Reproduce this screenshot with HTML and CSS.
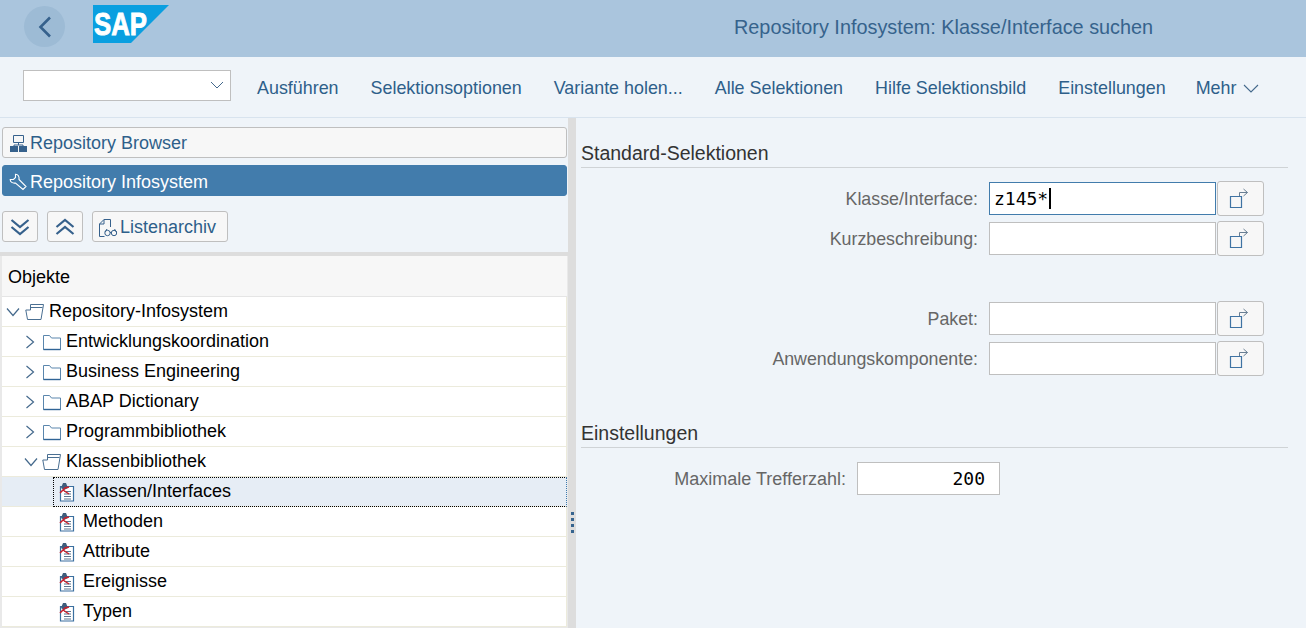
FILE: index.html
```html
<!DOCTYPE html>
<html lang="de">
<head>
  <meta charset="UTF-8">
  <title>Repository Infosystem</title>
  <link rel="stylesheet" href="styles.css">
</head>
<body>

<svg class="defs" width="0" height="0">
  <symbol id="folder" viewBox="0 0 20 18">
    <path d="M1.500 16.500V2.500h6l2 2.500h9v11.500z" fill="#fff" stroke="#5a86ad" stroke-width="1"/>
    <path d="M1.500 16.500h17" stroke="#2f6496" stroke-width="1.400"/>
  </symbol>
  <symbol id="folder-open" viewBox="0 0 20 18">
    <path d="M5.500 7V1.500h13L16 16.500H2.500L0.800 7z" fill="#fff" stroke="#4a6f92" stroke-width="1"/>
    <path d="M5.500 4.500h12" stroke="#4a6f92" stroke-width="1"/>
  </symbol>
  <symbol id="chev-r" viewBox="0 0 12 16">
    <path d="M2.500 2l7 6-7 6" fill="none" stroke="#44698c" stroke-width="1.200"/>
  </symbol>
  <symbol id="chev-d" viewBox="0 0 16 12">
    <path d="M2 2.500l6 7 6-7" fill="none" stroke="#44698c" stroke-width="1.200"/>
  </symbol>
  <symbol id="cls" viewBox="0 0 16 20">
    <path d="M1.500 4.500h13v14.500h-13z" fill="#fff" stroke="#3a6f9f" stroke-width="1.200"/>
    <path d="M5 9.500h7M5 12h7M5 14.500h7M5 17h7" stroke="#59758f" stroke-width="1"/>
    <path d="M4 1l3 0 2 5-4 2-3-2z" fill="#3f5c7c"/>
    <path d="M1 11l5-5 4-1M4 8l6 4" fill="none" stroke="#c9202a" stroke-width="1.500"/>
  </symbol>
  <symbol id="select" viewBox="0 0 20 22">
    <path d="M1.500 9.500h11v11h-11z" fill="none" stroke="#3f73a3" stroke-width="1.200"/>
    <path d="M10.500 9V5.500h8M14.500 2l4 3.500-4 3.500" fill="none" stroke="#6a7f93" stroke-width="1"/>
  </symbol>
</svg>

<header class="shell">
  <button class="back">
    <svg width="16" height="24" viewBox="0 0 16 24"><path d="M13 2.500L3.500 12l9.500 9.500" fill="none" stroke="#36618c" stroke-width="2.600"/></svg>
  </button>
  <svg class="logo" width="76" height="38" viewBox="0 0 76 38">
    <path d="M0 0h76L38 38H0z" fill="#0a9fe0"/>
    <text x="1" y="30" class="logo-text" textLength="53" lengthAdjust="spacingAndGlyphs">SAP</text>
  </svg>
  <div class="shell-title">Repository Infosystem: Klasse/Interface suchen</div>
</header>

<nav class="toolbar">
  <div class="combo">
    <svg width="14" height="8" viewBox="0 0 14 8"><path d="M1 1l6 6 6-6" fill="none" stroke="#44698c" stroke-width="1"/></svg>
  </div>
  <a>Ausführen</a>
  <a>Selektionsoptionen</a>
  <a>Variante holen...</a>
  <a>Alle Selektionen</a>
  <a>Hilfe Selektionsbild</a>
  <a>Einstellungen</a>
  <a class="more">Mehr
    <svg width="16" height="9" viewBox="0 0 16 9"><path d="M1 1l7 7 7-7" fill="none" stroke="#44698c" stroke-width="1.100"/></svg>
  </a>
</nav>

<main class="split">
  <aside class="left">
    <div class="tool-wide">
      <svg width="18" height="18" viewBox="0 0 18 18">
        <path d="M4.500 1.500h10v7h-10z" fill="none" stroke="#36618c"/>
        <path d="M9.500 8.500v2.500M5 12v-1h9v1" fill="none" stroke="#36618c"/>
        <path d="M1 12h8v6H1zM10 12h8v6h-8z" fill="#36618c"/>
      </svg>
      Repository Browser
    </div>
    <div class="tool-wide active">
      <svg width="18" height="18" viewBox="0 0 18 18">
        <path d="M6.500 1.200C9 1.200 10.500 3.500 10 6.500L17 13.500 14 16.500 6.500 10C3.500 10.500 1.200 9 1.200 6.500L4.500 6.500 6.500 4.500z" fill="none" stroke="#fff" stroke-width="1.100"/>
      </svg>
      Repository Infosystem
    </div>
    <div class="tool-row">
      <button class="tool-btn">
        <svg width="20" height="20" viewBox="0 0 20 20"><path d="M1.500 3l8.500 7 8.500-7M1.500 10l8.500 7 8.500-7" fill="none" stroke="#36618c" stroke-width="2.200"/></svg>
      </button>
      <button class="tool-btn">
        <svg width="20" height="20" viewBox="0 0 20 20"><path d="M1.500 10l8.500-7 8.500 7M1.500 17l8.500-7 8.500 7" fill="none" stroke="#36618c" stroke-width="2.200"/></svg>
      </button>
      <button class="tool-btn archive">
        <svg width="20" height="20" viewBox="0 0 20 20">
          <path d="M12.500 9V1.500H6L1.500 6v12.500h5M6 1.500V6H1.500" fill="none" stroke="#36618c"/>
          <circle cx="9.500" cy="15" r="2.700" fill="none" stroke="#36618c"/>
          <circle cx="16" cy="15" r="2.700" fill="none" stroke="#36618c"/>
          <path d="M12 14.500h1.500M7 14l2-3M18.500 14l-2-3" fill="none" stroke="#36618c"/>
        </svg>
        Listenarchiv
      </button>
    </div>
    <div class="tree">
      <div class="tree-head">Objekte</div>
      <div class="node lvl0">
        <svg class="chev" width="16" height="12"><use href="#chev-d"/></svg>
        <svg class="ficon" width="20" height="18"><use href="#folder-open"/></svg>
        Repository-Infosystem
      </div>
      <div class="node lvl1">
        <svg class="chev-side" width="12" height="16"><use href="#chev-r"/></svg>
        <svg class="ficon" width="20" height="18"><use href="#folder"/></svg>
        Entwicklungskoordination
      </div>
      <div class="node lvl1">
        <svg class="chev-side" width="12" height="16"><use href="#chev-r"/></svg>
        <svg class="ficon" width="20" height="18"><use href="#folder"/></svg>
        Business Engineering
      </div>
      <div class="node lvl1">
        <svg class="chev-side" width="12" height="16"><use href="#chev-r"/></svg>
        <svg class="ficon" width="20" height="18"><use href="#folder"/></svg>
        ABAP Dictionary
      </div>
      <div class="node lvl1">
        <svg class="chev-side" width="12" height="16"><use href="#chev-r"/></svg>
        <svg class="ficon" width="20" height="18"><use href="#folder"/></svg>
        Programmbibliothek
      </div>
      <div class="node lvl1">
        <svg class="chev" width="16" height="12"><use href="#chev-d"/></svg>
        <svg class="ficon" width="20" height="18"><use href="#folder-open"/></svg>
        Klassenbibliothek
      </div>
      <div class="node lvl2 selected">
        <div class="focus">
          <svg class="cicon" width="16" height="20"><use href="#cls"/></svg>
          Klassen/Interfaces
        </div>
      </div>
      <div class="node lvl2">
        <svg class="cicon" width="16" height="20"><use href="#cls"/></svg>
        Methoden
      </div>
      <div class="node lvl2">
        <svg class="cicon" width="16" height="20"><use href="#cls"/></svg>
        Attribute
      </div>
      <div class="node lvl2">
        <svg class="cicon" width="16" height="20"><use href="#cls"/></svg>
        Ereignisse
      </div>
      <div class="node lvl2">
        <svg class="cicon" width="16" height="20"><use href="#cls"/></svg>
        Typen
      </div>
    </div>
  </aside>

  <div class="splitter"><span class="grip"></span></div>

  <section class="right">
    <h2 class="group-title">Standard-Selektionen</h2>
    <div class="form-row">
      <label>Klasse/Interface:</label>
      <div class="field focused">z145*<span class="caret"></span></div>
      <button class="sel-btn"><svg width="20" height="22"><use href="#select"/></svg></button>
    </div>
    <div class="form-row">
      <label>Kurzbeschreibung:</label>
      <div class="field"></div>
      <button class="sel-btn"><svg width="20" height="22"><use href="#select"/></svg></button>
    </div>
    <div class="form-row gap-top">
      <label>Paket:</label>
      <div class="field"></div>
      <button class="sel-btn"><svg width="20" height="22"><use href="#select"/></svg></button>
    </div>
    <div class="form-row">
      <label>Anwendungskomponente:</label>
      <div class="field"></div>
      <button class="sel-btn"><svg width="20" height="22"><use href="#select"/></svg></button>
    </div>
    <h2 class="group-title second">Einstellungen</h2>
    <div class="form-row narrow">
      <label>Maximale Trefferzahl:</label>
      <div class="field number">200</div>
    </div>
  </section>
</main>

</body>
</html>
```

FILE: styles.css
```css
html, body {
  margin: 0;
  padding: 0;
  height: 100%;
  overflow: hidden;
}

body {
  font-family: 'Liberation Sans', Arial, sans-serif;
  font-size: 18px;
  background: #eff4f9;
  color: #000;
}

.defs {
  position: absolute;
}

button {
  font: inherit;
  padding: 0;
  margin: 0;
}

/* shell header */
.shell {
  height: 57px;
  background: #aac5dd;
  display: flex;
  align-items: flex-start;
  box-sizing: border-box;
}

.back {
  width: 41px;
  height: 41px;
  margin: 6px 0 0 24px;
  border: none;
  border-radius: 50%;
  background: #9dbbd5;
  display: flex;
  align-items: center;
  justify-content: center;
}

.logo {
  margin: 5px 0 0 28px;
}

.logo-text {
  font-family: 'Liberation Sans', Arial, sans-serif;
  font-weight: bold;
  font-size: 31px;
  fill: #fff;
  stroke: #fff;
  stroke-width: 0.9px;
}

.shell-title {
  margin: 16px 0 0 565px;
  font-size: 19.850px;
  line-height: 22px;
  color: #36638c;
  white-space: nowrap;
}

/* toolbar */
.toolbar {
  height: 61px;
  box-sizing: border-box;
  border-bottom: 1px solid #d8e3ee;
  display: flex;
  align-items: center;
  padding: 0 0 0 23px;
  color: #2e5f8a;
  font-size: 17.900px;
}

.toolbar a {
  margin: 2px 0 0 32px;
  line-height: 58px;
  white-space: nowrap;
}

.combo {
  width: 208px;
  height: 31px;
  box-sizing: border-box;
  border: 1px solid #bfbfbf;
  background: #fff;
  margin: 0 -6px 4px 0;
  display: flex;
  align-items: center;
  justify-content: flex-end;
  padding-right: 6px;
}

.toolbar .more {
  margin-left: 30px;
  display: flex;
  align-items: center;
  gap: 7px;
}

/* left column */
.split {
  display: flex;
  height: 510px;
}

.left {
  width: 568px;
  flex: none;
  padding: 9px 0 0 2px;
  box-sizing: border-box;
}

.tool-wide {
  width: 565px;
  height: 31px;
  box-sizing: border-box;
  border: 1px solid #bfbfbf;
  border-radius: 3px;
  background: #f7f7f7;
  color: #2e5f8a;
  display: flex;
  align-items: center;
  gap: 3px;
  padding: 1px 0 0 6px;
  margin-bottom: 7px;
}

.tool-wide.active {
  background: #427cac;
  border-color: #427cac;
  color: #fff;
  padding-top: 3px;
}

.tool-row {
  display: flex;
  gap: 9px;
  margin-top: 15px;
  height: 32px;
}

.tool-btn {
  width: 36px;
  height: 31px;
  border: 1px solid #bfbfbf;
  border-radius: 3px;
  background: #f7f7f7;
  color: #2e5f8a;
  display: flex;
  align-items: center;
  justify-content: center;
}

.tool-btn.archive {
  width: 136px;
  justify-content: flex-start;
  padding: 2px 0 0 5px;
  gap: 2px;
}

.tree {
  margin: 9px 0 0 -2px;
  border-top: 4px solid #dddddd;
  padding-left: 2px;
  background: #e9e9e9;
  height: 376px;
  overflow: hidden;
}

.tree-head {
  height: 41px;
  box-sizing: border-box;
  background: #f7f7f7;
  border-bottom: 1px solid #e5e5e5;
  display: flex;
  align-items: center;
  padding: 2px 0 0 6px;
  width: 565px;
}

.node {
  height: 30px;
  box-sizing: border-box;
  background: #fff;
  border-bottom: 1px solid #ecebdc;
  border-right: 1px solid #ecebdc;
  display: flex;
  align-items: center;
  width: 565px;
  white-space: nowrap;
}

.lvl0 {
  padding-left: 3px;
}

.lvl0 .chev {
  margin-right: 4px;
}

.lvl0 .ficon {
  margin-right: 4px;
}

.lvl1 {
  padding-left: 21px;
}

.lvl1 .chev-side {
  margin: 0 6px 0 1px;
}

.lvl1 .chev {
  margin: 0 3px 0 0;
}

.lvl1 .ficon {
  margin-right: 4px;
}

.lvl2 {
  padding-left: 57px;
}

.cicon {
  margin-right: 8px;
}

.node.selected {
  background: #e6edf5;
  padding-left: 51px;
  border-right: none;
}

.focus {
  flex: 1;
  height: 30px;
  box-sizing: border-box;
  border: 1px dotted #000;
  border-color: #000 #3f7aad #000 #000;
  display: flex;
  align-items: center;
  padding-left: 5px;
}

/* splitter */
.splitter {
  width: 8px;
  flex: none;
  background: #dddddd;
  position: relative;
}

.grip {
  position: absolute;
  left: 3px;
  top: 394px;
  width: 3px;
  height: 21px;
  background: repeating-linear-gradient(#36648f 0 3px, transparent 3px 6px);
}

/* right column */
.right {
  flex: 1;
  padding: 23px 18px 0 5px;
  box-sizing: border-box;
}

.group-title {
  margin: 0 0 10px;
  font-size: 19.500px;
  font-weight: normal;
  line-height: 25px;
  padding-bottom: 1px;
  color: #333;
  border-bottom: 1px solid #cfd3d6;
}

.group-title.second {
  margin-top: 43px;
}

.form-row {
  display: flex;
  align-items: center;
  height: 40px;
}

.form-row.gap-top {
  margin-top: 40px;
}

.form-row label {
  width: 397px;
  text-align: right;
  color: #666;
  white-space: nowrap;
  flex: none;
  font-size: 17.800px;
  padding-top: 2px;
}

.form-row.narrow label {
  width: 265px;
  font-size: 18px;
}

.field {
  width: 227px;
  height: 33px;
  box-sizing: border-box;
  margin-left: 11px;
  border: 1px solid #bfbfbf;
  background: #fff;
  font-family: 'DejaVu Sans Mono', monospace;
  font-size: 18px;
  line-height: 31px;
  padding: 0 4px;
  display: flex;
  align-items: center;
}

.field.focused {
  border-color: #427cac;
}

.caret {
  width: 2px;
  height: 21px;
  background: #000;
  margin-left: 1px;
}

.field.number {
  width: 143px;
  justify-content: flex-end;
  padding-right: 14px;
}

.sel-btn {
  width: 47px;
  height: 35px;
  margin-left: 1px;
  border: 1px solid #bfbfbf;
  border-radius: 3px;
  background: #f7f7f7;
  display: flex;
  align-items: center;
  justify-content: center;
}

.sel-btn svg {
  margin-right: 3px;
}
```
